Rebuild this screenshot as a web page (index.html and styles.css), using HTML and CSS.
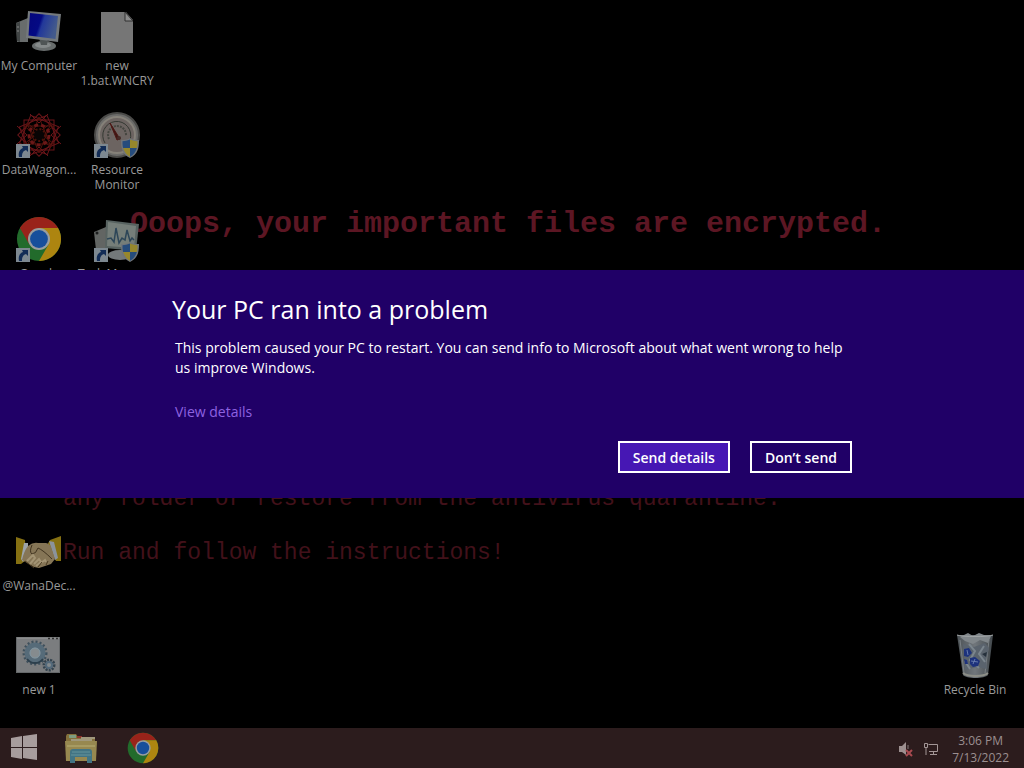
FILE: index.html
```html
<!DOCTYPE html>
<html lang="en">
<head>
    <meta charset="UTF-8">
    <meta name="viewport" content="width=device-width, initial-scale=1.0">
    <title>Desktop</title>
    <link rel="stylesheet" href="styles.css">
</head>
<body>
    <svg class="defs" aria-hidden="true">
        <defs>
            <linearGradient id="screen" x1="0" y1="0" x2="1" y2="0.300">
                <stop offset="0" stop-color="#04067c"/>
                <stop offset="0.45" stop-color="#040a84"/>
                <stop offset="0.55" stop-color="#22389a"/>
                <stop offset="1" stop-color="#435a8c"/>
            </linearGradient>
            <linearGradient id="glass" x1="0" y1="0" x2="1" y2="0">
                <stop offset="0" stop-color="#4c5256"/>
                <stop offset="0.5" stop-color="#70767b"/>
                <stop offset="1" stop-color="#42484c"/>
            </linearGradient>
            <symbol id="shortcut" viewBox="0 0 14 14">
                <rect width="14" height="14" fill="#7d8890"/>
                <path d="M3 13C2 8 4 5 7 4L6 2l6 0 0 6-2-2C7 7 6 9 6 13z" fill="#122c56"/>
            </symbol>
            <symbol id="shield" viewBox="0 0 18 20">
                <path d="M9 0C6 2 3 2 0 2c0 8 1 14 9 18 8-4 9-10 9-18-3 0-6 0-9-2z" fill="#70757a"/>
                <path d="M9 1.500C6 3 4 3 1.500 3.300c0 2.500 0 4.700.7 6.700H9z" fill="#264c7c"/>
                <path d="M9 1.500c3 1.500 5 1.500 7.500 1.800 0 2.500 0 4.700-.7 6.700H9z" fill="#96872c"/>
                <path d="M2.200 10C3.300 14 5.500 17 9 18.800V10z" fill="#96872c"/>
                <path d="M15.800 10c-1.100 4-3.300 7-6.800 8.800V10z" fill="#264c7c"/>
            </symbol>
            <symbol id="chrome" viewBox="0 0 48 48">
                <circle cx="24" cy="24" r="23" fill="#226b2b"/>
                <path d="M4.100 12.500A23 23 0 0 1 43.900 12.500H24L14 29.800z" fill="#99231a"/>
                <path d="M43.900 12.500A23 23 0 0 1 24 47L34 29.800 24 12.500z" fill="#ad8510"/>
                <circle cx="24" cy="24" r="11.500" fill="#999e9e"/>
                <circle cx="24" cy="24" r="9.300" fill="#174f9b"/>
            </symbol>
        </defs>
    </svg>

    <div class="screen">
        <main class="desktop">
            <div class="wallpaper">
                <p class="ooops">Ooops, your important files are encrypted.</p>
                <p class="ransom quarantine">any folder or restore from the antivirus quarantine.</p>
                <p class="ransom run">Run and follow the instructions!</p>
            </div>

            <div class="icons">
                <a class="icon r1" href="#">
                    <svg viewBox="0 0 48 48">
                        <path d="M1 15l12-5v24L2 34z" fill="#686c6c"/>
                        <path d="M1 15l4-1v20l-3-1z" fill="#414545"/>
                        <path d="M2 19l2 0M2 23l2 0" stroke="#888"/>
                        <ellipse cx="29" cy="38" rx="12" ry="5" fill="#686d6d"/>
                        <ellipse cx="28" cy="37" rx="8" ry="3" fill="#858a8a"/>
                        <path d="M24 30h9l-1 7h-6z" fill="#4f5555"/>
                        <path d="M13 3l33 3-3 28-32-4z" fill="#74797c"/>
                        <path d="M15 5l28 3-2.500 23-27-3.500z" fill="url(#screen)"/>
                    </svg>
                    <span>My Computer</span>
                </a>
                <a class="icon r2" href="#">
                    <svg viewBox="0 0 48 48">
                        <g fill="none" stroke="#6a1519">
                            <rect x="9" y="8" width="30" height="30"/>
                            <rect x="9" y="8" width="30" height="30" transform="rotate(22 24 23)"/>
                            <rect x="9" y="8" width="30" height="30" transform="rotate(45 24 23)"/>
                            <rect x="9" y="8" width="30" height="30" transform="rotate(67 24 23)"/>
                            <path d="M15 2l9 9 9-9M15 44l9-9 9 9M2 14l10 9-10 9M46 14l-10 9 10 9"/>
                            <path d="M24 5l12 30L9 14h30L12 35z" stroke="#54120d"/>
                            <path d="M24 41L36 11 9 32h30L12 11z" stroke="#54120d"/>
                        </g>
                        <circle cx="24" cy="23" r="10" fill="none" stroke="#6c1818" stroke-width="3" stroke-dasharray="4 3"/>
                        <circle cx="24" cy="23" r="6" fill="#080404" stroke="#4a120a" stroke-width="2" stroke-dasharray="2 2"/>
                        <use href="#shortcut" x="1" y="32" width="14" height="14"/>
                    </svg>
                    <span>DataWagon...</span>
                </a>
                <a class="icon r3" href="#">
                    <svg viewBox="0 0 48 48">
                        <use href="#chrome" x="1" y="0" width="46" height="46"/>
                        <use href="#shortcut" x="1" y="32" width="14" height="14"/>
                    </svg>
                    <span>Google Chrome</span>
                </a>
                <a class="icon r6" href="#">
                    <svg viewBox="0 0 48 48">
                        <path d="M1 9l9 3 1 20-5 4H1z" fill="#857012"/>
                        <path d="M46 8l-11 4-3 5 9 16 5 0z" fill="#857012"/>
                        <path d="M9 15l4 0 0 12-5 7-2-3z" fill="#9da4aa"/>
                        <path d="M34 13l5 1 4 16-3 2z" fill="#8b939b"/>
                        <path d="M13 18q5-4 10-3l8 0q5 1 6 7l3 9-4 5-12 4-5-1-12-7q2-9 6-14z" fill="#857556"/>
                        <path d="M17 17q-3 7 0 9 4 0 6-6 5 2 14 11" fill="none" stroke="#40331f"/>
                        <path d="M12 33l6-6 2 3-5 6M19 36l5-5 2 3-5 4M26 35l4-3 1 2" fill="none" stroke="#a39474" stroke-width="2"/>
                        <path d="M10 33l9 7M23 39l4-5M31 37l2-4" stroke="#4a3a20"/>
                    </svg>
                    <span>@WanaDec...</span>
                </a>
                <a class="icon r7" href="#">
                    <svg viewBox="0 0 48 48">
                        <rect x="1.500" y="5.500" width="43" height="35" fill="#7b7d7f" stroke="#65686a"/>
                        <path d="M2 6h42" stroke="#999" stroke-width="1"/>
                        <path d="M33 6.500h10" stroke="#333" stroke-width="1.500" stroke-dasharray="2 2"/>
                        <circle cx="20" cy="21" r="11" fill="none" stroke="#3f505c" stroke-width="3" stroke-dasharray="2 2"/>
                        <circle cx="20" cy="21" r="8" fill="none" stroke="#566b79" stroke-width="5"/>
                        <circle cx="20" cy="21" r="5" fill="#858b8e" stroke="#7e96a3"/>
                        <path d="M12 27a10 10 0 0 0 16 0" fill="none" stroke="#2c3f4c" stroke-width="2"/>
                        <circle cx="34" cy="33" r="5" fill="none" stroke="#34434e" stroke-width="3" stroke-dasharray="2 1"/>
                        <circle cx="34" cy="33" r="3" fill="#858b8e" stroke="#53697a" stroke-width="2"/>
                    </svg>
                    <span>new 1</span>
                </a>
                <a class="icon r1 second" href="#">
                    <svg viewBox="0 0 48 48">
                        <path d="M8 4h25l7 8v33H8z" fill="#767676"/>
                        <path d="M32 4v9h8z" fill="#8c8c8c" stroke="#303030"/>
                    </svg>
                    <span>new 1.bat.WNCRY</span>
                </a>
                <a class="icon r2 second" href="#">
                    <svg viewBox="0 0 48 48">
                        <circle cx="24" cy="23" r="22" fill="#6c6c6a" stroke="#4a4a48" stroke-width="2"/>
                        <circle cx="24" cy="23" r="18" fill="#6c6461" stroke="#858179" stroke-width="2"/>
                        <path d="M12 31a14 14 0 1 1 25-3" fill="none" stroke="#343832" stroke-width="1"/>
                        <path d="M16 27a9 9 0 1 1 17-3" fill="none" stroke="#454640" stroke-width="2" stroke-dasharray="2 1"/>
                        <path d="M17 11l10 16-3 1z" fill="#3e1512" stroke="#4e1714"/>
                        <circle cx="26" cy="26" r="2" fill="#442a26"/>
                        <use href="#shield" x="28" y="26" width="18" height="20"/>
                        <use href="#shortcut" x="1" y="32" width="14" height="14"/>
                    </svg>
                    <span>Resource Monitor</span>
                </a>
                <a class="icon r3 second" href="#">
                    <svg viewBox="0 0 48 48">
                        <path d="M1 16l12-5v24L3 34z" fill="#626563"/>
                        <circle cx="4" cy="17" r="1.500" fill="#1c1e1e"/>
                        <ellipse cx="27" cy="39" rx="12" ry="5" fill="#73797a"/>
                        <path d="M13 4l33 4-3 27-31-3z" fill="#586361"/>
                        <path d="M15 6l28 4-2 22-27-2z" fill="#757e79"/>
                        <path d="M14 23l4-1 3 4 2-14 3 15 3-5 3 2 2-10 3 11 2-3 2 2" fill="none" stroke="#2d4658" stroke-width="1.500"/>
                        <use href="#shield" x="28" y="26" width="18" height="20"/>
                        <use href="#shortcut" x="1" y="32" width="14" height="14"/>
                    </svg>
                    <span class="one-line">Task Manager</span>
                </a>
                <a class="icon r7 bin" href="#">
                    <svg viewBox="0 0 48 48">
                        <path d="M6 3l36 0-5 40c-3 4-22 4-25 0z" fill="url(#glass)"/>
                        <path d="M9 8l4 33M38 8l-4 33" stroke="#7a8084" stroke-width="1"/>
                        <path d="M9 5l8-4 5 3 6-3 5 2 7 1-3 7-8-3-7 4-8-3z" fill="#80868a"/>
                        <path d="M12 12l11 3 11-4 4 5-3 11 1 10-10-2-12 3z" fill="#5a636d"/>
                        <path d="M18 12l6 7-5 9 9 8M33 14l-5 8 6 8M14 29l5 8" fill="none" stroke="#7b858d" stroke-width="2"/>
                        <path d="M13 17l5-1 3 5-4 4-4-1zM19 26l5-1 5 4-2 5-5 1-3-3zM13 27l3 1 1 4-3 0z" fill="#1d327c"/>
                        <path d="M16 18l1 5M24 27l-2 5M20 29l7 1" stroke="#667bad" stroke-width="1"/>
                        <path d="M31 22l5-2-1 5z" fill="#25303b"/>
                        <path d="M6 3c5 2 31 2 36 0" fill="none" stroke="#a1a5a6"/>
                        <path d="M12 41c5 4 20 4 25 0" fill="none" stroke="#8c8e87" stroke-width="2"/>
                    </svg>
                    <span>Recycle Bin</span>
                </a>
            </div>
        </main>

        <footer class="taskbar">
            <button class="start" aria-label="Start">
                <svg viewBox="0 0 28 28" width="28" height="28">
                    <path d="M1 4l11-2v11H1zM13 2l14-2v13H13zM1 14h11v11L1 23zM13 14h14v12l-14-2z" fill="#a79d9d"/>
                </svg>
            </button>
            <button class="task" aria-label="File Explorer">
                <svg viewBox="0 0 34 32" width="34" height="32">
                    <path d="M2 4l1-2h9l2 3h17v24H2z" fill="#84703b"/>
                    <path d="M5 3h7v3H5z" fill="#7e9c80"/>
                    <path d="M13 4h5v2h-5z" fill="#8d332b"/>
                    <path d="M17 6h14M7 8h21" stroke="#a0987c" stroke-width="2"/>
                    <path d="M1 9h32l-1 20H2z" fill="#978850"/>
                    <path d="M3 14h28" stroke="#a79b62" stroke-width="2"/>
                    <path d="M6 31V20q0-3 3-3h16q3 0 3 3v11h-5v-6H11v6z" fill="#427484"/>
                    <path d="M8 20h18M7 23h20" stroke="#64949b"/>
                </svg>
            </button>
            <button class="task" aria-label="Google Chrome">
                <svg width="32" height="32"><use href="#chrome" x="0" y="0" width="32" height="32"/></svg>
            </button>
            <div class="tray">
                <svg viewBox="0 0 16 16" width="16" height="16">
                    <path d="M1 5h3l4-4v13l-4-3H1z" fill="#9d9090"/>
                    <path d="M10 4v4" stroke="#85797a"/>
                    <path d="M8 9l6 6M14 9l-6 6" stroke="#a94a50" stroke-width="2"/>
                </svg>
                <svg viewBox="0 0 16 16" width="16" height="16">
                    <path d="M5.500 3.500h9v7H6M10.500 10v3M7 13.500h7M1.500 2.500h3v4h-3zM3 7v7" fill="none" stroke="#a39696"/>
                </svg>
                <div class="clock">
                    <div>3:06 PM</div>
                    <div>7/13/2022</div>
                </div>
            </div>
        </footer>

        <div class="overlay">
            <section class="dialog" role="dialog" aria-labelledby="dialog-title">
                <div class="dialog-body">
                    <h1 id="dialog-title">Your PC ran into a problem</h1>
                    <p>This problem caused your PC to restart. You can send info to Microsoft about what went wrong to help us improve Windows.</p>
                    <a class="details" href="#">View details</a>
                    <div class="buttons">
                        <button class="button primary">Send details</button>
                        <button class="button">Don’t send</button>
                    </div>
                </div>
            </section>
        </div>
    </div>
</body>
</html>
```
FILE: styles.css
```css
* {
    box-sizing: border-box;
}

body {
    margin: 0;
    background-color: #000;
    font-family: "Open Sans", "Noto Sans", sans-serif;
}

button {
    font-family: inherit;
    cursor: pointer;
}

.defs {
    position: absolute;
    width: 0;
    height: 0;
}

.screen {
    position: relative;
    display: flex;
    flex-direction: column;
    min-height: 100vh;
    overflow: hidden;
}

.desktop {
    position: relative;
    flex: 1;
}

/* wallpaper text sits under the icons */
.wallpaper {
    position: absolute;
    inset: 0;
    font-family: "Liberation Mono", monospace;
    white-space: nowrap;
}

.wallpaper p {
    position: absolute;
    margin: 0;
}

.ooops {
    left: 130px;
    top: 207px;
    font-size: 30px;
    font-weight: bold;
    line-height: 34px;
    color: #5c1623;
}

.ransom {
    left: 63px;
    font-size: 23px;
    line-height: 28px;
    color: #42111a;
}

.quarantine {
    top: 485px;
}

.run {
    top: 539px;
}

.icons {
    position: relative;
    display: grid;
    grid-template-columns: repeat(auto-fill, 78px);
    grid-template-rows: repeat(7, 104px);
}

.icon {
    grid-column: 1;
    display: flex;
    flex-direction: column;
    align-items: center;
    padding-top: 8px;
    color: #999;
    font-size: 12px;
    line-height: 15px;
    text-align: center;
    text-decoration: none;
}

.icon svg {
    width: 48px;
    height: 48px;
    flex: none;
    margin-bottom: 2px;
}

.one-line {
    white-space: nowrap;
}

.second {
    grid-column: 2;
}

.bin {
    grid-column: -2;
}

.r1 { grid-row: 1; }
.r2 { grid-row: 2; }
.r3 { grid-row: 3; }
.r6 { grid-row: 6; }
.r7 { grid-row: 7; }

.taskbar {
    display: flex;
    align-items: center;
    height: 40px;
    background-color: #2c1c1d;
}

.start,
.task {
    display: flex;
    justify-content: center;
    align-items: center;
    height: 40px;
    padding: 0;
    border: none;
    background: none;
}

.start {
    width: 48px;
    margin-right: 2px;
}

.task {
    width: 62px;
}

.tray {
    display: flex;
    align-items: center;
    gap: 9px;
    margin-left: auto;
    padding: 2px 15px 0 0;
    color: #9b8f90;
}

.clock {
    margin-left: 4px;
    font-size: 12px;
    line-height: 17px;
    text-align: center;
}

.overlay {
    position: absolute;
    inset: 0;
    display: flex;
    align-items: center;
}

.dialog {
    width: 100%;
    padding: 20px 16px 25px;
    background-color: #200067;
    color: #fff;
}

.dialog-body {
    max-width: 680px;
    margin: 0 auto;
}

.dialog h1 {
    margin: 0 0 10px;
    font-size: 25px;
    font-weight: 400;
    line-height: 38px;
}

.dialog p {
    margin: 0 0 24px;
    padding-left: 3px;
    font-size: 14px;
    line-height: 20px;
}

.details {
    display: block;
    padding-left: 3px;
    color: #8e62e0;
    font-size: 14px;
    line-height: 20px;
    text-decoration: none;
}

.buttons {
    display: flex;
    justify-content: flex-end;
    gap: 20px;
    margin-top: 19px;
}

.button {
    height: 32px;
    padding: 0 13px;
    border: 2px solid #fff;
    background-color: #200067;
    color: #fff;
    font-size: 14px;
    font-weight: 600;
}

.button.primary {
    background-color: #4617b4;
}
```
